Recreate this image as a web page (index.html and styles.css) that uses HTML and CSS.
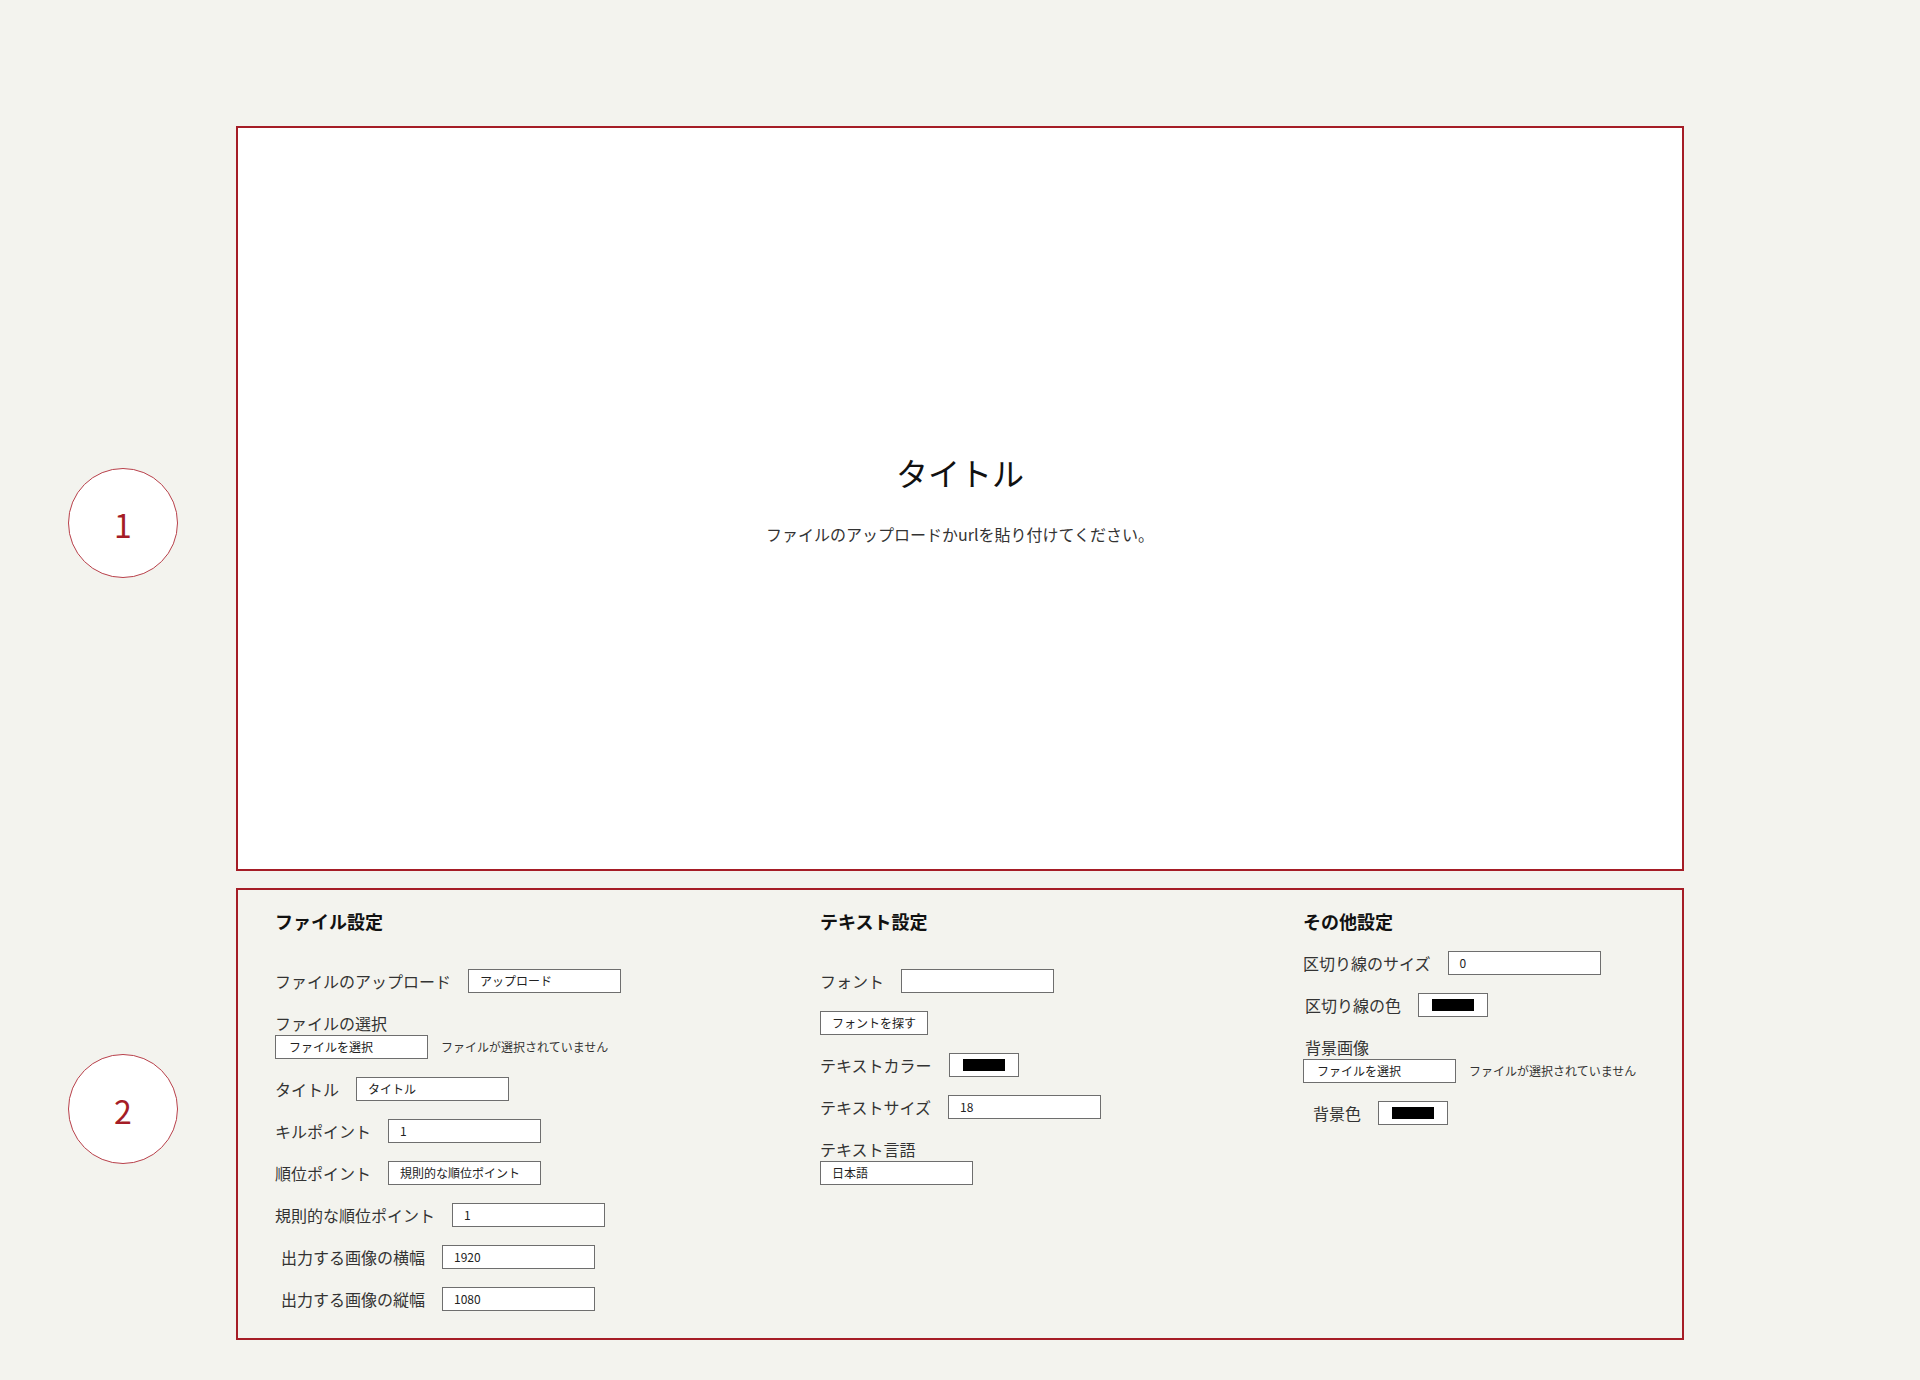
FILE: index.html
```html
<!DOCTYPE html>
<html lang="ja">
<head>
<meta charset="utf-8">
<title>設定</title>
<link rel="stylesheet" href="styles.css">
</head>
<body>
<main class="page">
  <section class="section section-preview">
    <div class="marker-col"><div class="marker marker-1">1</div></div>
    <div class="preview">
      <h1 class="preview-title">タイトル</h1>
      <p class="preview-text">ファイルのアップロードかurlを貼り付けてください。</p>
    </div>
  </section>

  <section class="section section-settings">
    <div class="marker-col"><div class="marker marker-2">2</div></div>
    <div class="settings">
      <div class="col">
        <h2 class="col-title">ファイル設定</h2>
        <div class="rows">
          <div class="row"><span class="label">ファイルのアップロード</span><span class="field">アップロード</span></div>
          <div class="stack">
            <span class="label">ファイルの選択</span>
            <div class="file"><span class="file-btn">ファイルを選択</span><span class="file-status">ファイルが選択されていません</span></div>
          </div>
          <div class="row"><span class="label">タイトル</span><span class="field">タイトル</span></div>
          <div class="row"><span class="label">キルポイント</span><span class="field">1</span></div>
          <div class="row"><span class="label">順位ポイント</span><span class="field">規則的な順位ポイント</span></div>
          <div class="row"><span class="label">規則的な順位ポイント</span><span class="field">1</span></div>
          <div class="row"><span class="label indent-6">出力する画像の横幅</span><span class="field">1920</span></div>
          <div class="row"><span class="label indent-6">出力する画像の縦幅</span><span class="field">1080</span></div>
        </div>
      </div>

      <div class="col">
        <h2 class="col-title">テキスト設定</h2>
        <div class="rows">
          <div class="row"><span class="label">フォント</span><span class="field"></span></div>
          <div class="row"><span class="button">フォントを探す</span></div>
          <div class="row"><span class="label">テキストカラー</span><span class="color"><span class="swatch"></span></span></div>
          <div class="row"><span class="label">テキストサイズ</span><span class="field">18</span></div>
          <div class="stack">
            <span class="label">テキスト言語</span>
            <span class="field">日本語</span>
          </div>
        </div>
      </div>

      <div class="col">
        <h2 class="col-title col-title-tight">その他設定</h2>
        <div class="rows">
          <div class="row"><span class="label">区切り線のサイズ</span><span class="field">0</span></div>
          <div class="row"><span class="label indent-2">区切り線の色</span><span class="color"><span class="swatch"></span></span></div>
          <div class="stack">
            <span class="label indent-2">背景画像</span>
            <div class="file"><span class="file-btn">ファイルを選択</span><span class="file-status">ファイルが選択されていません</span></div>
          </div>
          <div class="row"><span class="label indent-10">背景色</span><span class="color"><span class="swatch"></span></span></div>
        </div>
      </div>
    </div>
  </section>
</main>
</body>
</html>
```

FILE: styles.css
```css
* { box-sizing: border-box; }

html, body {
  margin: 0;
  padding: 0;
  background: #f3f3ee;
}

body {
  font-family: "Noto Sans CJK JP", "Noto Sans", sans-serif;
  color: #333;
  width: 1920px;
  height: 1380px;
}

.page {
  padding-top: 126px;
  display: flex;
  flex-direction: column;
  gap: 17px;
}

.section {
  display: flex;
  align-items: flex-start;
}

.marker-col {
  width: 236px;
  flex: 0 0 236px;
}

.marker {
  width: 110px;
  height: 110px;
  margin-left: 68px;
  border: 1px solid #b8404a;
  border-radius: 50%;
  background: #fff;
  color: #a51d26;
  font-size: 32px;
  line-height: 1;
  display: flex;
  align-items: center;
  justify-content: center;
  padding-top: 2px;
}

.marker-1 { margin-top: 342px; }
.marker-2 { margin-top: 166px; }

.preview {
  width: 1448px;
  height: 745px;
  border: 2px solid #a51d26;
  background: #fff;
  display: flex;
  flex-direction: column;
  align-items: center;
  justify-content: center;
  padding-bottom: 3px;
}

.preview-title {
  margin: 0 0 26px;
  font-size: 32px;
  line-height: 48px;
  font-weight: 400;
  color: #111;
}

.preview-text {
  margin: 0;
  font-size: 16px;
  line-height: 24px;
  color: #333;
}

.settings {
  width: 1448px;
  border: 2px solid #a51d26;
  padding: 18px 0 27px 37px;
  display: grid;
  grid-template-columns: 545px 483px 1fr;
}

.col-title {
  margin: 0 0 35px;
  font-size: 18px;
  line-height: 26px;
  font-weight: 700;
  color: #111;
}

.col-title-tight { margin-bottom: 17px; }

.rows {
  display: flex;
  flex-direction: column;
  gap: 18px;
}

.row {
  display: flex;
  align-items: center;
  gap: 17px;
  height: 24px;
}

.stack {
  display: flex;
  flex-direction: column;
  align-items: flex-start;
}

.label {
  font-size: 16px;
  line-height: 24px;
  color: #333;
  white-space: nowrap;
}

.indent-2 { padding-left: 2px; }
.indent-6 { padding-left: 6px; }
.indent-10 { padding-left: 10px; }

.field {
  width: 153px;
  height: 24px;
  border: 1px solid #6e6e6e;
  background: #fff;
  font-size: 12px;
  line-height: 22px;
  padding: 0 11px;
  color: #222;
  white-space: nowrap;
  display: block;
}

.button {
  height: 24px;
  border: 1px solid #6e6e6e;
  background: #fff;
  font-size: 12px;
  line-height: 22px;
  padding: 0 11px;
  color: #222;
  white-space: nowrap;
}

.color {
  width: 70px;
  height: 24px;
  border: 1px solid #6e6e6e;
  background: #fff;
  display: flex;
  align-items: center;
  justify-content: center;
}

.swatch {
  width: 42px;
  height: 12px;
  background: #000;
  display: block;
}

.file {
  display: flex;
  align-items: center;
  gap: 13px;
  height: 24px;
}

.file-btn {
  width: 153px;
  height: 24px;
  border: 1px solid #6e6e6e;
  background: #fff;
  font-size: 12px;
  line-height: 22px;
  padding: 0 13px;
  color: #222;
  white-space: nowrap;
}

.file-status {
  font-size: 12px;
  line-height: 22px;
  color: #333;
  white-space: nowrap;
}
```
